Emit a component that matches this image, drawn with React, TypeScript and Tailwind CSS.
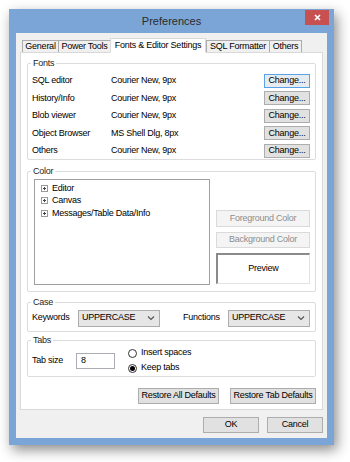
import React from 'react';

const font = { fontFamily: '"Liberation Sans", Arial, sans-serif' };

function GroupBox({ label, className, children }: { label: string; className: string; children: React.ReactNode }) {
  return (
    <div className={`relative border border-[#dcdcdc] rounded-[2px] ${className}`}>
      <span className="absolute -top-[7px] left-[3px] bg-white px-[2px] leading-[12px] text-[#1e1e1e]">{label}</span>
      {children}
    </div>
  );
}

function Button({ label, className = '', focused = false, disabled = false }: { label: string; className?: string; focused?: boolean; disabled?: boolean }) {
  return (
    <div
      className={`flex items-center justify-center border ${
        disabled
          ? 'bg-[#f4f4f4] border-[#dadada] text-[#8d8d8d]'
          : focused
          ? 'bg-[#e6ebf0] border-[#5aa2e8] text-black'
          : 'bg-[#e1e1e1] border-[#adadad] text-black'
      } ${className}`}
    >
      {label}
    </div>
  );
}

function Select({ value, className }: { value: string; className: string }) {
  return (
    <div className={`flex items-center justify-between bg-[#e6e6e6] border border-[#acacac] pl-[3px] pr-[4px] ${className}`}>
      <span className="text-black">{value}</span>
      <svg width="8" height="6" viewBox="0 0 8 6">
        <path d="M1 1.5 L4 4.5 L7 1.5" fill="none" stroke="#555" strokeWidth="1.2" />
      </svg>
    </div>
  );
}

function Radio({ label, checked }: { label: string; checked?: boolean }) {
  return (
    <div className="flex items-center h-[15px]">
      <div className="w-[9px] h-[9px] rounded-full border border-[#333] bg-white flex items-center justify-center">
        {checked && <div className="w-[5px] h-[5px] rounded-full bg-black" />}
      </div>
      <span className="ml-[4px] text-black">{label}</span>
    </div>
  );
}

function TreeItem({ label }: { label: string }) {
  return (
    <div className="flex items-center h-[12.5px]">
      <div className="relative w-[7px] h-[7px] border border-[#9a9a9a] bg-white">
        <div className="absolute left-[1px] top-[2px] w-[3px] h-px bg-[#444]" />
        <div className="absolute left-[2px] top-[1px] w-px h-[3px] bg-[#444]" />
      </div>
      <span className="ml-[4px] text-black">{label}</span>
    </div>
  );
}

export default function App() {
  const fonts = [
    { name: 'SQL editor', value: 'Courier New, 9px' },
    { name: 'History/Info', value: 'Courier New, 9px' },
    { name: 'Blob viewer', value: 'Courier New, 9px' },
    { name: 'Object Browser', value: 'MS Shell Dlg, 8px' },
    { name: 'Others', value: 'Courier New, 9px' },
  ];

  const tabs = [
    { label: 'General', w: 'w-[37px]' },
    { label: 'Power Tools', w: 'w-[53px]' },
    { label: 'Fonts & Editor Settings', w: 'w-[96px]', active: true },
    { label: 'SQL Formatter', w: 'w-[64px]' },
    { label: 'Others', w: 'w-[33px]' },
  ];

  return (
    <div className="w-[350px] h-[462px] bg-white pt-[9px] pl-[9px] text-[9px] tracking-[-0.25px]" style={font}>
      <div className="relative w-[325px] h-[436px] bg-[#7ba5d6] flex flex-col px-[7px] pb-[7px] shadow-[3px_5px_12px_rgba(0,0,0,0.45)]">
        <div className="h-[24px] flex items-center justify-center">
          <span className="text-[11px] tracking-normal text-[#2b2b2b]">Preferences</span>
        </div>
        <div className="absolute right-[5px] top-[1px] w-[24px] h-[15px] bg-[#c75050] flex items-center justify-center">
          <svg width="7" height="7" viewBox="0 0 7 7">
            <path d="M1 1 L6 6 M6 1 L1 6" stroke="white" strokeWidth="1.6" />
          </svg>
        </div>

        <div className="flex-1 bg-[#f0f0f0] flex flex-col px-[4px] pt-[5px]">
          <div className="relative z-10 flex items-end h-[14px] pl-[2px]">
            {tabs.map((t) =>
              t.active ? (
                <div
                  key={t.label}
                  className={`${t.w} h-[15px] -mb-px flex items-center justify-center bg-white border border-[#d9d9d9] border-b-white text-black`}
                >
                  {t.label}
                </div>
              ) : (
                <div
                  key={t.label}
                  className={`${t.w} h-[12px] flex items-center justify-center bg-[#f0f0f0] border border-[#acacac] border-b-0 -mr-px text-black`}
                >
                  {t.label}
                </div>
              )
            )}
          </div>

          <div className="h-[358px] bg-white border border-[#d9d9d9] flex flex-col px-[6px] pt-[10px]">
            <GroupBox label="Fonts" className="h-[97px] pt-[8px] pl-[4px] pr-[5px]">
              {fonts.map((f, i) => (
                <div key={f.name} className="flex items-center h-[17.5px]">
                  <span className="w-[79px] text-black">{f.name}</span>
                  <span className="flex-1 text-black">{f.value}</span>
                  <Button label="Change..." focused={i === 0} className="w-[46px] h-[14px]" />
                </div>
              ))}
            </GroupBox>

            <GroupBox label="Color" className="mt-[11px] h-[121px] flex pt-[7px] pb-[6px] pl-[6px] pr-[5px]">
              <div className="w-[176px] border border-[#a0a0a0] bg-white pt-[2px] pl-[6px]">
                <TreeItem label="Editor" />
                <TreeItem label="Canvas" />
                <TreeItem label="Messages/Table Data/Info" />
              </div>
              <div className="ml-[6px] flex-1 flex flex-col justify-end gap-[5px] pb-px">
                <Button label="Foreground Color" disabled className="h-[17px]" />
                <Button label="Background Color" disabled className="h-[16px]" />
                <div className="h-[31px] bg-white border border-[#e3e3e3] border-t-[#8a8a8a] border-l-[#8a8a8a] border-t-2 border-l-2 flex items-center justify-center text-black">
                  Preview
                </div>
              </div>
            </GroupBox>

            <GroupBox label="Case" className="mt-[10px] h-[30px] flex items-center pl-[4px] pr-[5px] pt-[2px]">
              <span className="w-[46px] text-black">Keywords</span>
              <Select value="UPPERCASE" className="w-[82px] h-[17px]" />
              <span className="ml-[23px] w-[45px] text-black">Functions</span>
              <Select value="UPPERCASE" className="w-[82px] h-[17px]" />
            </GroupBox>

            <GroupBox label="Tabs" className="mt-[8px] h-[37px] flex items-center pl-[4px] pt-[4px]">
              <span className="w-[44px] text-black">Tab size</span>
              <div className="w-[39px] h-[16px] bg-white border border-[#abadb3] flex items-center pl-[4px] text-black">8</div>
              <div className="ml-[13px] flex flex-col">
                <Radio label="Insert spaces" />
                <Radio label="Keep tabs" checked />
              </div>
            </GroupBox>

            <div className="mt-[11px] flex justify-end gap-[11px]">
              <Button label="Restore All Defaults" className="w-[81px] h-[16px]" />
              <Button label="Restore Tab Defaults" className="w-[86px] h-[16px]" />
            </div>
          </div>

          <div className="mt-[7px] flex justify-end gap-[8px] pr-0">
            <Button label="OK" className="w-[56px] h-[16px]" />
            <Button label="Cancel" className="w-[56px] h-[16px]" />
          </div>
        </div>
      </div>
    </div>
  );
}
